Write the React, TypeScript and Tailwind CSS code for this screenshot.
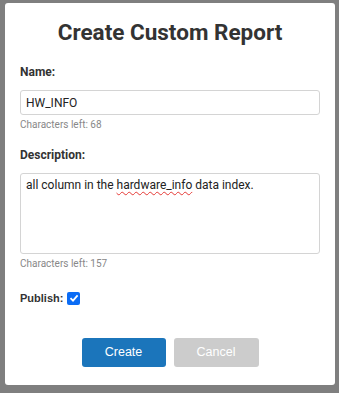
import React from "react";

function Field({ label, children, left }: { label: string; children: React.ReactNode; left: string }) {
  return (
    <div className="flex flex-col">
      <label className="text-[12px] leading-[16px] font-bold text-[#333]">{label}</label>
      {children}
      <span className="mt-[4px] text-[10px] leading-[12px] text-[#888]">Characters left: {left}</span>
    </div>
  );
}

export default function App() {
  return (
    <div className="w-[339px] h-[393px] bg-[#7f7f7f] pt-[3px] px-[5px] font-['Roboto',sans-serif]">
      <div className="w-[330px] h-[382px] bg-white rounded-[3px] pt-[15px] px-[15px] flex flex-col">
        <h1 className="text-center text-[22.5px] leading-[28px] font-bold text-[#333]">Create Custom Report</h1>

        <div className="mt-[18px]">
          <Field label="Name:" left="68">
            <div className="mt-[10px] h-[25px] border border-[#d4d4d4] rounded-[3px] px-[5px] flex items-center text-[12px] text-[#222]">
              HW_INFO
            </div>
          </Field>
        </div>

        <div className="mt-[16px]">
          <Field label="Description:" left="157">
            <div className="mt-[10px] h-[81px] border border-[#d4d4d4] rounded-[3px] px-[5px] pt-[3px] text-[12px] leading-[16px] text-[#222]">
              all column in the{" "}
              <span className="underline decoration-wavy decoration-[#e53935] decoration-[1px] underline-offset-2">hardware_info</span>{" "}
              data index.
            </div>
          </Field>
        </div>

        <div className="mt-[20px] flex items-center gap-[4px] font-['Liberation_Sans',sans-serif] text-[11px] leading-[16px] font-bold text-[#333]">
          <span>Publish:</span>
          <span className="w-[13px] h-[13px] rounded-[2px] bg-[#0b6cf5] flex items-center justify-center">
            <svg width="10" height="10" viewBox="0 0 10 10">
              <path d="M1.5 5.2 L4 7.6 L8.6 2.4" fill="none" stroke="white" strokeWidth="1.8" />
            </svg>
          </span>
        </div>

        <div className="mt-[32px] flex justify-center gap-[8px] font-['Liberation_Sans',sans-serif] text-[12.5px]">
          <button className="w-[84px] h-[29px] rounded-[3px] bg-[#1b75bb] text-white">Create</button>
          <button className="w-[85px] h-[29px] rounded-[3px] bg-[#cccccc] text-white">Cancel</button>
        </div>
      </div>
    </div>
  );
}
